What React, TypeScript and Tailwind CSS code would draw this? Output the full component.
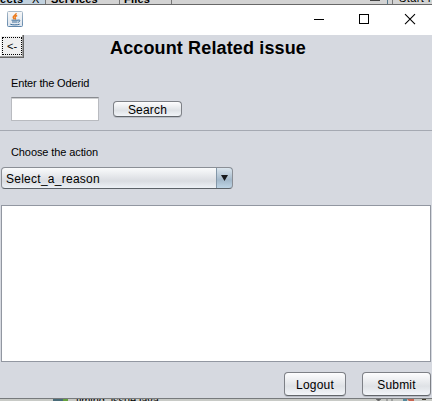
import React from "react";

const sans = "font-['Liberation_Sans',Arial,sans-serif]";

function JavaIcon() {
  return (
    <svg width="16" height="16" viewBox="0 0 16 16" className="block">
      <defs>
        <linearGradient id="tile" x1="0" y1="0" x2="0" y2="1">
          <stop offset="0" stopColor="#a9bac9" />
          <stop offset="1" stopColor="#5f86ab" />
        </linearGradient>
        <linearGradient id="face" x1="0" y1="0" x2="0" y2="1">
          <stop offset="0" stopColor="#f7f7f7" />
          <stop offset="1" stopColor="#dde5ee" />
        </linearGradient>
      </defs>
      <rect x="0.5" y="0.5" width="15" height="15" rx="1" fill="url(#face)" stroke="url(#tile)" />
      <path d="M9.2 2.2C9.5 4 5.7 4.7 6.2 6.4C6.4 7.2 7 7.8 7.4 8.3M10.2 4.5C8 5.3 7.7 6 8.3 6.8C8.7 7.4 8.5 7.9 8 8.4" fill="none" stroke="#ec7a1c" strokeWidth="1.4" />
      <path d="M4.5 9.2H11M5 11H10.5M11 9.2C13.6 8.2 13.4 10.8 11 11.3M3.3 13.2C5 14.1 10.5 14.1 12.6 13.2" fill="none" stroke="#3c6d99" strokeWidth="1" />
    </svg>
  );
}

function NimbusButton({ children, className }: { children: React.ReactNode; className: string }) {
  return (
    <button
      className={`flex shrink-0 items-center justify-center rounded-[4px] border border-[#7d8086] border-b-[#62666b] bg-linear-to-b from-[#fdfdfe] via-[#dfe2e6] via-60% to-[#f2f5f9] pt-[2px] text-[12px] leading-[14px] tracking-[0.2px] text-black shadow-[0_1px_0_#b9bdc5] ${className}`}
    >
      {children}
    </button>
  );
}

export default function App() {
  return (
    <div className={`flex h-[401px] w-[432px] flex-col overflow-hidden bg-[#d6d9e0] text-black ${sans}`}>
      {/* IDE tabs behind the dialog */}
      <div className="flex h-[5px] shrink-0 overflow-hidden border-b border-[#686868] bg-[#d3d3d3] text-[11px] font-bold leading-[12px]">
        <div className="h-1 w-[46px] shrink-0 overflow-hidden border-r border-[#777] bg-[#c2d2df]">
          <div className="-mt-[7px] flex whitespace-nowrap tracking-[0.4px]"><span className="w-[32px]">ects</span><span className="font-normal">X</span></div>
        </div>
        <div className="h-1 w-[74px] shrink-0 overflow-hidden border-r border-[#777] pl-[5px]">
          <div className="-mt-[7px] tracking-[0.2px]">Services</div>
        </div>
        <div className="h-1 w-[52px] shrink-0 overflow-hidden border-r border-[#777] pl-[4px]">
          <div className="-mt-[7px] tracking-[0.2px]">Files</div>
        </div>
        <div className="flex h-1 w-[216px] shrink-0 justify-end border-r border-[#55788d] pr-[7px]">
          <div className="h-[1px] w-[10px] bg-[#444]" />
        </div>
        <div className="ml-[4px] h-1 grow overflow-hidden border-l border-[#777] pl-[6px] font-normal">
          <div className="-mt-[8px] whitespace-nowrap tracking-[0.4px]">Start Page</div>
        </div>
      </div>

      <header className="flex h-[30px] shrink-0 items-start bg-white pl-[7px]">
        <div className="mt-[6px] grow"><JavaIcon /></div>
        <svg width="118" height="30" viewBox="0 0 118 30" fill="none" stroke="#000" className="block shrink-0">
          <path d="M0 14.5H10M45.5 9.5H54.5V18.5H45.5Z" shapeRendering="crispEdges" />
          <path d="M91 9.2L101 19.2M101 9.2L91 19.2" strokeWidth="1.1" />
        </svg>
      </header>

      <div className="flex h-[42px] shrink-0 items-start">
        <button className="flex h-[23px] w-[24px] shrink-0 border border-l-0 border-t-0 border-[#686868] bg-[#efefef] pb-px pl-[2px] pr-px pt-[2px] shadow-[inset_-1px_-1px_0_#a0a0a0,inset_1px_1px_0_#fff]">
          <span className="flex h-[18px] w-[20px] items-center justify-center border border-dotted border-black text-[11px] leading-none">&lt;-</span>
        </button>
        <h1 className="ml-[86px] mt-[3px] whitespace-nowrap text-[18px] font-bold leading-[21px] tracking-[0.14px]">Account Related issue</h1>
      </div>

      <label className="ml-[11px] block h-[20px] shrink-0 whitespace-nowrap text-[11px] leading-[13px] tracking-[-0.16px]">Enter the Oderid</label>
      <div className="flex h-[33px] shrink-0 items-start pl-[11px]">
        <div className="h-[24px] w-[88px] border border-[#b9bbc0] border-t-[#898b90] bg-white shadow-[inset_0_1px_0_#cfd0d2]" />
        <NimbusButton className="ml-[14px] mt-[4px] h-[16px] w-[69px]">Search</NimbusButton>
      </div>
      <div className="h-px shrink-0 bg-[#a5a9b2]" />

      <label className="ml-[11px] mt-[15px] block h-[21px] shrink-0 whitespace-nowrap text-[11px] leading-[13px] tracking-[-0.1px]">Choose the action</label>
      <div className="ml-px flex h-[22px] w-[232px] shrink-0 overflow-hidden rounded-[4px] border border-[#8b8f96] border-b-[#5c6268] bg-linear-to-b from-[#fafbfc] via-[#d9dce1] via-65% to-[#edf1f6]">
        <span className="grow pl-[4px] pt-[4px] text-[12px] leading-[14px] tracking-[0.26px]">Select_a_reason</span>
        <span className="-my-px -mr-px flex w-[17px] items-center justify-center rounded-r-[4px] border border-[#52697e] border-l-[#8397a8] bg-linear-to-b from-[#dce6ee] via-[#a3b8ca] via-60% to-[#bfd5e6]">
          <svg width="7" height="6" viewBox="0 0 7 6" className="block"><path d="M0 0H7L3.5 6Z" fill="#17191c" /></svg>
        </span>
      </div>

      <div className="ml-px mt-[16px] h-[157px] w-[430px] shrink-0 border border-[#9297a1] bg-white" />

      <div className="flex h-[36px] shrink-0 justify-end gap-[16px] pr-px pt-[10px]">
        <NimbusButton className="h-[24px] w-[62px]">Logout</NimbusButton>
        <NimbusButton className="h-[24px] w-[69px]">Submit</NimbusButton>
      </div>

      {/* Editor row showing beneath the dialog */}
      <div className="flex h-[3px] shrink-0 overflow-hidden border-t border-[#777a7c] bg-[#c8cac6]">
        <div className="ml-[53px] h-[2px] w-[10px] shrink-0 bg-[#496b78]" />
        <div className="h-[2px] w-[5px] shrink-0 bg-[#66a23e]" />
        <div className="ml-[8px] h-[2px] w-[296px] shrink-0 overflow-hidden text-[11px] leading-[12px]">
          <div className="-mt-[5px] tracking-[-0.1px]">timing_issue.java</div>
        </div>
        <svg width="56" height="2" viewBox="0 0 56 2" className="block shrink-0">
          <path d="M4 0H9L6.5 2ZM15 0V2M20 0V2" fill="#444" stroke="#777" />
          <path d="M31 0H35V2H31Z" fill="#55899b" />
          <path d="M35 0H42V2H37Z" fill="#c86551" />
          <path d="M50 0H54" stroke="#423c2c" strokeWidth="2" />
        </svg>
      </div>
    </div>
  );
}
